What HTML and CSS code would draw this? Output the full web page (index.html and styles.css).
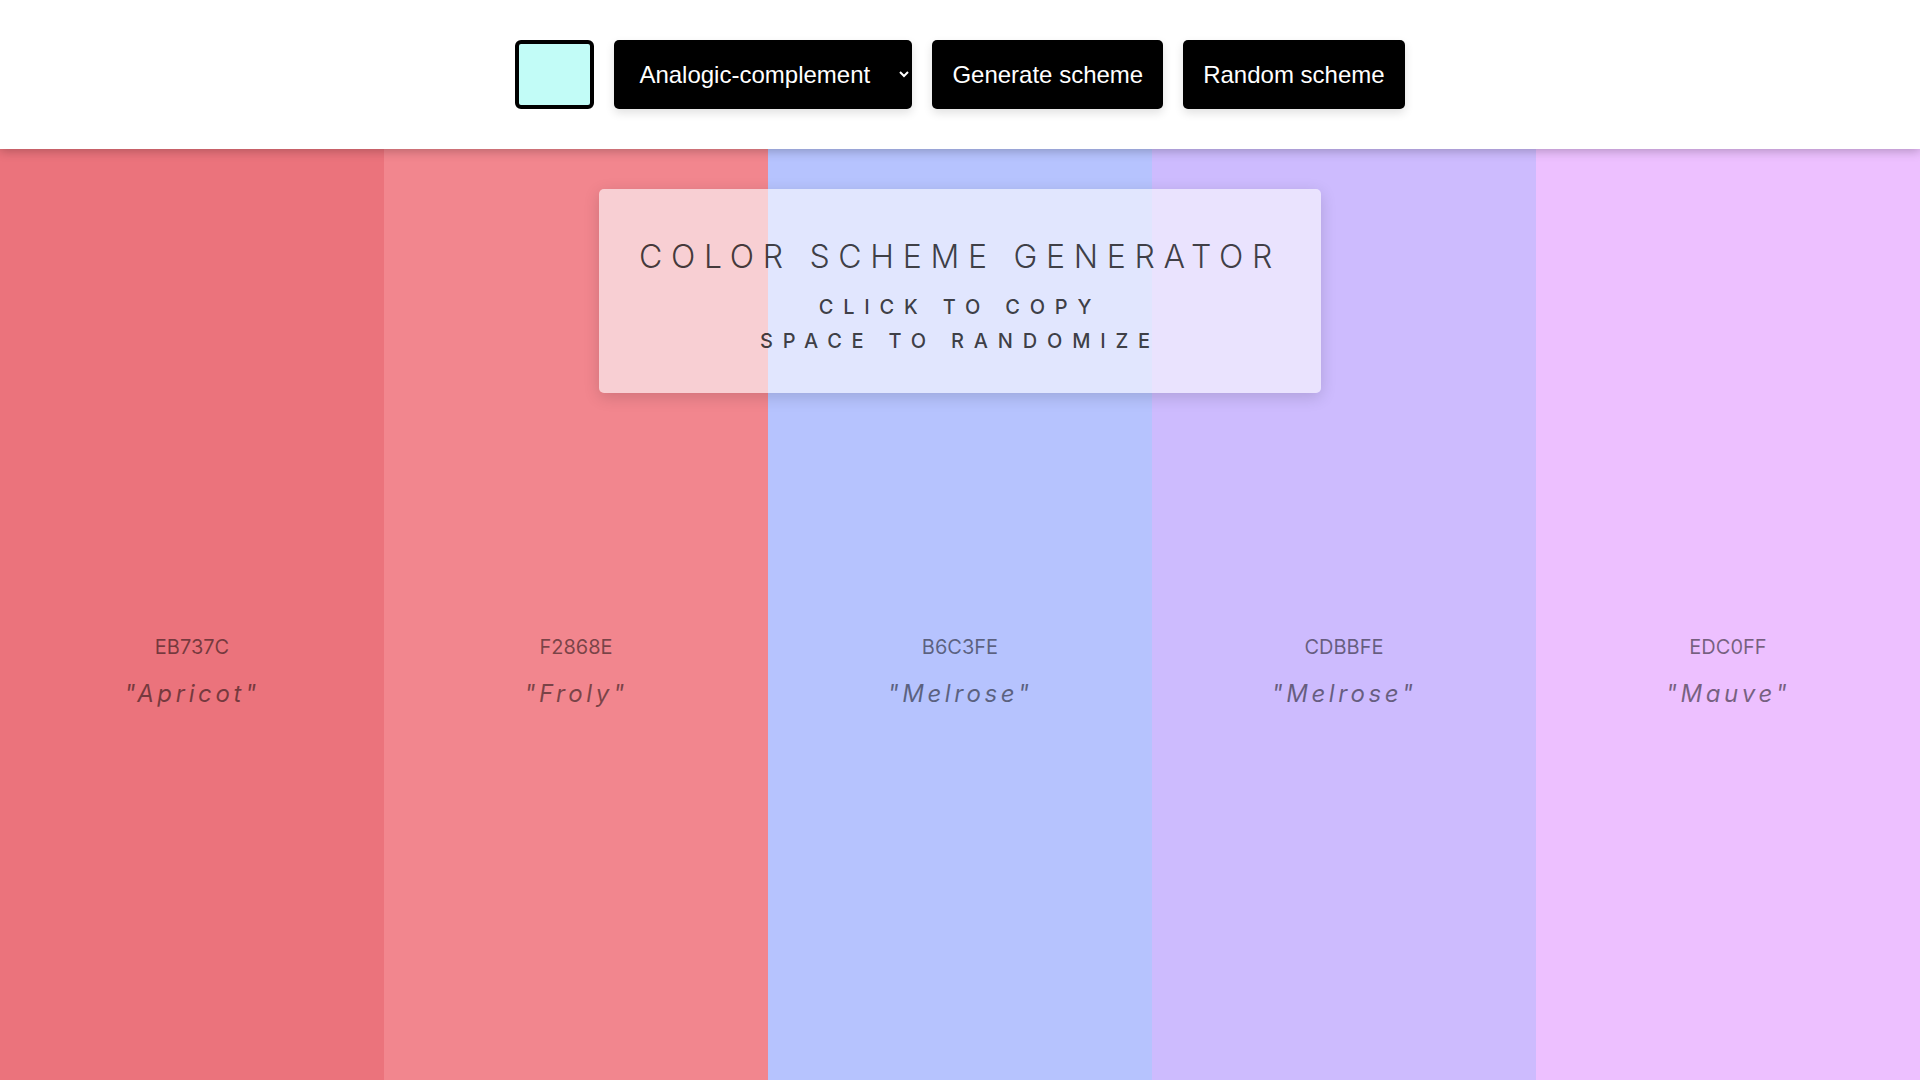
FILE: index.html
```html
<!DOCTYPE html>
<html lang="en">
<head>
<meta charset="utf-8">
<title>Color Scheme Generator</title>
<link rel="stylesheet" href="styles.css">
</head>
<body>
<header class="toolbar">
  <div class="swatch-input"></div>
  <select class="mode-select">
    <option>Analogic-complement</option>
    <option>Monochrome</option>
    <option>Analogic</option>
    <option>Complement</option>
    <option>Triad</option>
  </select>
  <button class="btn">Generate scheme</button>
  <button class="btn">Random scheme</button>
</header>
<main class="palette">
  <div class="column c1"><span class="hex">EB737C</span><span class="name">"Apricot"</span></div>
  <div class="column c2"><span class="hex">F2868E</span><span class="name">"Froly"</span></div>
  <div class="column c3"><span class="hex">B6C3FE</span><span class="name">"Melrose"</span></div>
  <div class="column c4"><span class="hex">CDBBFE</span><span class="name">"Melrose"</span></div>
  <div class="column c5"><span class="hex">EDC0FF</span><span class="name">"Mauve"</span></div>
  <div class="card">
    <h1 class="card-title">COLOR SCHEME GENERATOR</h1>
    <p class="card-sub">CLICK TO COPY<br>SPACE TO RANDOMIZE</p>
  </div>
</main>
</body>
</html>
```
FILE: styles.css
```css
* { box-sizing: border-box; }
html, body { margin: 0; padding: 0; height: 100%; overflow: hidden; }
body { font-family: "Liberation Sans", Arial, sans-serif; background: #fff; }

.toolbar {
  position: relative;
  z-index: 2;
  height: 149px;
  background: #fff;
  display: flex;
  align-items: center;
  justify-content: center;
  gap: 20px;
  box-shadow: 0 2px 10px rgba(0, 0, 0, 0.25);
}
.swatch-input {
  width: 79px;
  height: 69px;
  border: 4px solid #000;
  border-radius: 6px;
  background: #c2fcf7;
}
.mode-select {
  width: 298px;
  height: 69px;
  padding: 0 6px 0 21px;
  background-color: #000;
  color: #fff;
  border: none;
  border-radius: 5px;
  font-family: "Liberation Sans", Arial, sans-serif;
  font-size: 24px;
  box-shadow: 0 4px 10px rgba(0, 0, 0, 0.12);
}
.btn {
  height: 69px;
  padding: 0 20px;
  background: #000;
  color: #fff;
  border: none;
  border-radius: 5px;
  font-family: "Liberation Sans", Arial, sans-serif;
  font-size: 24px;
  box-shadow: 0 4px 10px rgba(0, 0, 0, 0.12);
}

.palette {
  position: relative;
  display: flex;
  height: calc(100% - 149px);
}
.column {
  flex: 1;
  display: flex;
  flex-direction: column;
  align-items: center;
  padding-top: 486px;
  font-family: Inter, "Noto Sans", sans-serif;
  color: rgba(0, 0, 0, 0.5);
}
.c1 { background: #eb737c; }
.c2 { background: #f2868e; }
.c3 { background: #b6c3fe; }
.c4 { background: #cdbbfe; }
.c5 { background: #edc0ff; }
.hex {
  font-size: 20px;
  line-height: 24px;
}
.name {
  margin-top: 20px;
  font-size: 24px;
  line-height: 30px;
  font-style: italic;
  letter-spacing: 0.15em;
}

.card {
  position: absolute;
  top: 40px;
  left: 50%;
  width: 722px;
  height: 204px;
  margin-left: -361px;
  padding: 48px 0 0;
  background: rgba(252, 252, 254, 0.62);
  border-radius: 5px;
  box-shadow: 0 4px 16px rgba(0, 0, 0, 0.15);
  text-align: center;
  font-family: Inter, "Noto Sans", sans-serif;
  color: rgba(0, 0, 0, 0.74);
}
.card-title {
  margin: 0;
  font-size: 32px;
  line-height: 40px;
  font-weight: 300;
  letter-spacing: 8.7px;
}
.card-sub {
  margin: 12.7px 0 0;
  font-size: 20px;
  line-height: 34px;
  font-weight: 500;
  letter-spacing: 9.8px;
}
```
